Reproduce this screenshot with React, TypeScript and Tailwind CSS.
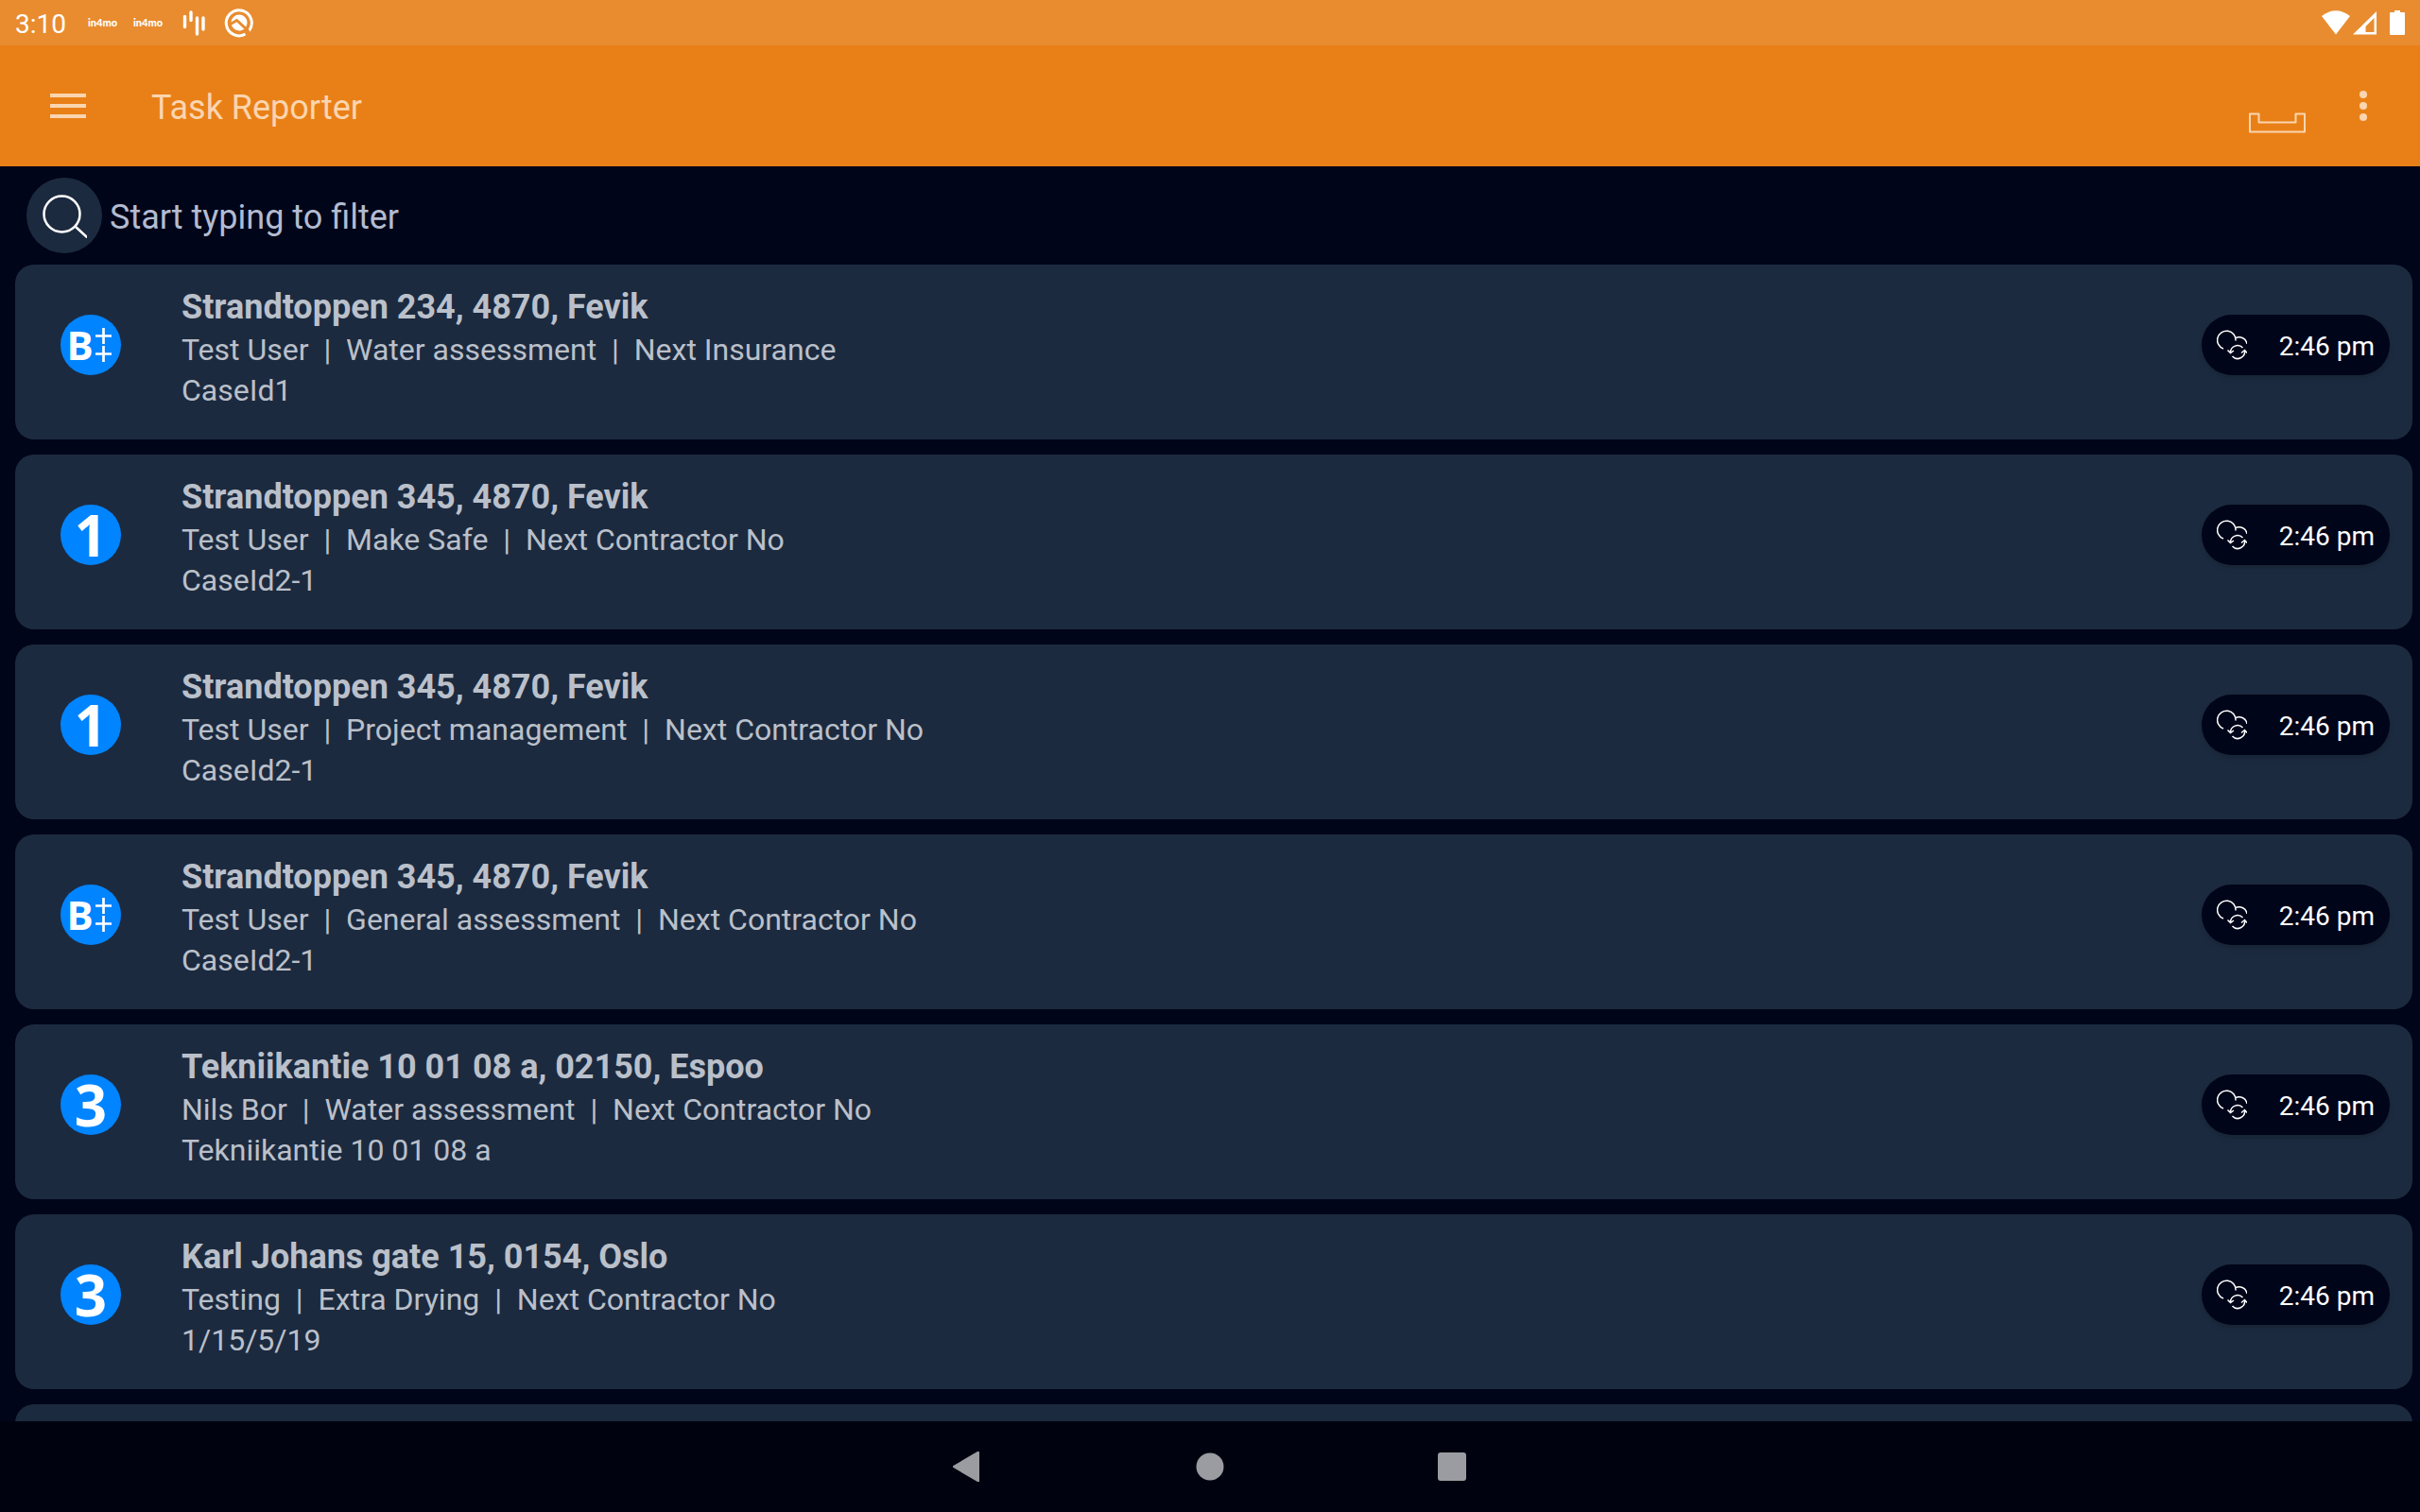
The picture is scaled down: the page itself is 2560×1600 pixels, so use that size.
import type { ReactNode } from "react"

interface Task {
  badge: "B" | "1" | "3"
  address: string
  details: string[]
  caseId: string
  time: string
}

const tasks: Task[] = [
  { badge: "B", address: "Strandtoppen 234, 4870, Fevik", details: ["Test User", "Water assessment", "Next Insurance"], caseId: "CaseId1", time: "2:46 pm" },
  { badge: "1", address: "Strandtoppen 345, 4870, Fevik", details: ["Test User", "Make Safe", "Next Contractor No"], caseId: "CaseId2-1", time: "2:46 pm" },
  { badge: "1", address: "Strandtoppen 345, 4870, Fevik", details: ["Test User", "Project management", "Next Contractor No"], caseId: "CaseId2-1", time: "2:46 pm" },
  { badge: "B", address: "Strandtoppen 345, 4870, Fevik", details: ["Test User", "General assessment", "Next Contractor No"], caseId: "CaseId2-1", time: "2:46 pm" },
  { badge: "3", address: "Tekniikantie 10 01 08 a, 02150, Espoo", details: ["Nils Bor", "Water assessment", "Next Contractor No"], caseId: "Tekniikantie 10 01 08 a", time: "2:46 pm" },
  { badge: "3", address: "Karl Johans gate 15, 0154, Oslo", details: ["Testing", "Extra Drying", "Next Contractor No"], caseId: "1/15/5/19", time: "2:46 pm" },
]

function StatusBar() {
  return (
    <div className="flex h-12 shrink-0 items-center justify-between bg-[#e88c2f] px-4 text-white">
      <div className="flex items-center">
        <span className="w-[77px] pt-1 text-[28px] leading-8">3:10</span>
        <span className="w-12 font-[Lato] text-[11px] leading-4 font-black">in4mo</span>
        <span className="w-[52px] font-[Lato] text-[11px] leading-4 font-black">in4mo</span>
        <svg className="h-8 w-11" viewBox="0 0 44 32" fill="none" stroke="currentColor" strokeWidth="3.4" strokeLinecap="round">
          <path d="M2.5 9.5v11M9 5v8.500M15.500 11v17M22 11v12" />
        </svg>
        <svg className="size-8" viewBox="0 0 32 32" fill="none">
          <path d="M22.500 28A13.500 13.500 0 1 1 26.500 24.500" stroke="currentColor" strokeWidth="3" />
          <circle cx="16" cy="16" r="8.500" fill="currentColor" />
          <path d="M6 18l7.500-4.500L26 25" className="stroke-[#e88c2f]" strokeWidth="3" />
        </svg>
      </div>
      <svg className="h-8 w-[88px]" viewBox="0 0 88 32" fill="currentColor">
        <path d="M0 9Q15 -2.500 30 9L15 28.500z" />
        <path d="M33 28.500L58 4v24.500zM55.500 11L46.500 20v6h9z" fillRule="evenodd" />
        <path d="M77 3h6v2h4q1 0 1 1v22q0 1-1 1H73q-1 0-1-1V6q0-1 1-1h4z" />
      </svg>
    </div>
  )
}

function Header() {
  return (
    <header className="flex h-32 shrink-0 items-center justify-between bg-[#e98017] pr-10 pl-[53px] text-[#fbd5b0]">
      <div className="flex items-center gap-[69px]">
        <button type="button" aria-label="Open menu">
          <svg className="h-7 w-[38px]" viewBox="0 0 38 28" fill="currentColor">
            <path d="M0 1h38v4H0zM0 12h38v4H0zM0 23h38v4H0z" />
          </svg>
        </button>
        <h1 className="pt-1 text-4xl leading-10">Task Reporter</h1>
      </div>
      <div className="flex items-center gap-12">
        <button type="button" aria-label="Toggle dock" className="pt-9">
          <svg className="h-[22px] w-[62px]" viewBox="0 0 62 22" fill="none" stroke="currentColor" strokeWidth="2">
            <path d="M2 1.500h9.500v9h39v-9H60v19H2z" strokeLinejoin="round" />
          </svg>
        </button>
        <button type="button" aria-label="More options" className="px-2 pr-4">
          <svg className="h-8 w-2" viewBox="0 0 8 32" fill="currentColor">
            <circle cx="4" cy="4" r="4" />
            <circle cx="4" cy="16" r="4" />
            <circle cx="4" cy="28" r="4" />
          </svg>
        </button>
      </div>
    </header>
  )
}

function SearchRow() {
  return (
    <div className="flex items-center gap-2 px-7 py-3">
      <label htmlFor="filter" className="flex size-20 shrink-0 items-center justify-center rounded-full bg-[#1c2a3f]">
        <svg className="size-12 text-white" viewBox="0 0 48 48" fill="none" stroke="currentColor" strokeWidth="2.500" strokeLinecap="round">
          <circle cx="21.500" cy="22.500" r="19" />
          <path d="M36 36l12 11" />
        </svg>
      </label>
      <input
        id="filter"
        type="text"
        aria-label="Filter tasks"
        placeholder="Start typing to filter"
        className="min-w-0 flex-1 bg-transparent pt-1 text-4xl leading-10 text-[#b3bbd0] outline-none placeholder:text-[#b3bbd0]"
      />
    </div>
  )
}

function Badge({ kind }: { kind: Task["badge"] }) {
  return (
    <div className="mt-8 flex size-16 shrink-0 items-center justify-center rounded-full bg-[#0084ff] font-['Open_Sans'] font-bold text-white">
      {kind === "B" ? (
        <div className="flex items-center gap-0.5 pr-1">
          <span className="text-[42px] leading-none">B</span>
          <svg className="h-9 w-[17px]" viewBox="0 0 17 36" fill="none" stroke="currentColor" strokeWidth="2.7">
            <path d="M8.500 0v17M0 8.500h17M8.500 19v17M0 27.500h17" />
          </svg>
        </div>
      ) : (
        <span className="text-[60px] leading-none">{kind}</span>
      )}
    </div>
  )
}

function SyncIcon() {
  return (
    <svg className="size-8" viewBox="0 0 32 32" fill="none" stroke="currentColor" strokeWidth="1.500">
      <path d="M7 20A9.700 9.700 0 1 1 20 11.500M20 8.500a8.500 8.500 0 0 1 12 6.500" />
      <path d="M14.500 24a7.500 7.500 0 0 1 13-5M29.500 22a7.500 7.500 0 0 1-13 6M11.500 21.500l3 3 3.500-2.500M26 24.500l3.500-3 2.500 3" />
    </svg>
  )
}

function TaskCard({ task }: { task: Task }) {
  return (
    <li className="flex h-[185px] shrink-0 items-start rounded-[20px] bg-[#1c2a3f] pt-[21px] pr-6 pl-12">
      <Badge kind={task.badge} />
      <div className="ml-16 min-w-0 flex-1 text-[32px] leading-[43px] text-[#bac0ca]">
        <h2 className="text-4xl leading-[48px] font-bold">{task.address}</h2>
        <p className="whitespace-pre">{task.details.join("  |  ")}</p>
        <p>{task.caseId}</p>
      </div>
      <div className="mt-8 flex h-16 w-[199px] shrink-0 items-center justify-between rounded-full bg-[#000519] px-4 text-white shadow-md">
        <SyncIcon />
        <time className="pt-1 text-[28px] leading-8">{task.time}</time>
      </div>
    </li>
  )
}

function NavButton({ label, children }: { label: string; children: ReactNode }) {
  return (
    <button type="button" aria-label={label}>
      <svg className="size-8" viewBox="0 0 32 32" fill="currentColor">
        {children}
      </svg>
    </button>
  )
}

function NavigationBar() {
  return (
    <nav className="flex h-24 shrink-0 items-center justify-center gap-56 bg-[#00030f] text-[#9b9ca1]">
      <NavButton label="Back">
        <path d="M26 0q2-1 2 1v30q0 2-2 1L.5 17q-1.500-1 0-2z" />
      </NavButton>
      <NavButton label="Home">
        <circle cx="16" cy="16" r="14.500" />
      </NavButton>
      <NavButton label="Recent apps">
        <rect x="1" y="1" width="30" height="30" rx="3" />
      </NavButton>
    </nav>
  )
}

export default function App() {
  return (
    <div className="flex h-screen flex-col overflow-hidden bg-[#000519] font-[Roboto,sans-serif]">
      <StatusBar />
      <Header />
      <main className="flex min-h-0 flex-1 flex-col">
        <SearchRow />
        <ul className="flex min-h-0 flex-1 flex-col gap-4 overflow-hidden pr-2 pl-4">
          {tasks.map((task, i) => (
            <TaskCard key={i} task={task} />
          ))}
          {/* next card, still below the fold */}
          <li className="h-[185px] shrink-0 rounded-[20px] bg-[#1c2a3f]" />
        </ul>
      </main>
      <NavigationBar />
    </div>
  )
}
